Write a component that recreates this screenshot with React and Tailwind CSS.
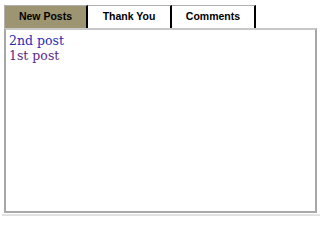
const tabs = ["New Posts", "Thank You", "Comments"];

const posts = [
  { title: "2nd post", color: "text-[#2a2ab8]" },
  { title: "1st post", color: "text-[#5b2a8a]" },
];

function Tab({ label, active, first }) {
  return (
    <div
      className={
        "w-[84px] h-[23px] flex items-center justify-center border-t border-t-[#b0b0b0] border-r-2 border-r-black text-[10.5px] font-bold text-black " +
        (active ? "bg-[#9d9571] " : "bg-white ") +
        (first ? "border-l border-l-[#b0b0b0] w-[83px]" : "")
      }
    >
      {label}
    </div>
  );
}

export default function App() {
  return (
    <div className="w-[320px] h-[217px] bg-white relative" style={{ fontFamily: '"Liberation Sans", Arial, sans-serif' }}>
      <div className="pt-[5px] pl-[4px] w-[317px]">
        <div className="flex">
          {tabs.map((t, i) => (
            <Tab key={t} label={t} active={i === 0} first={i === 0} />
          ))}
        </div>
        <div className="h-[185px] border-2 border-[#a8a8a8] border-t-[#c8c8c8] px-[3px] pt-[3px] leading-[15px] text-[12.5px]" style={{ fontFamily: '"DejaVu Serif", "Liberation Serif", serif' }}>
          {posts.map((p) => (
            <div key={p.title} className={p.color}>
              {p.title}
            </div>
          ))}
        </div>
      </div>
      <div className="absolute left-[2px] right-0 top-[214px] h-[2px] bg-[#e2e2e2]" />
    </div>
  );
}
